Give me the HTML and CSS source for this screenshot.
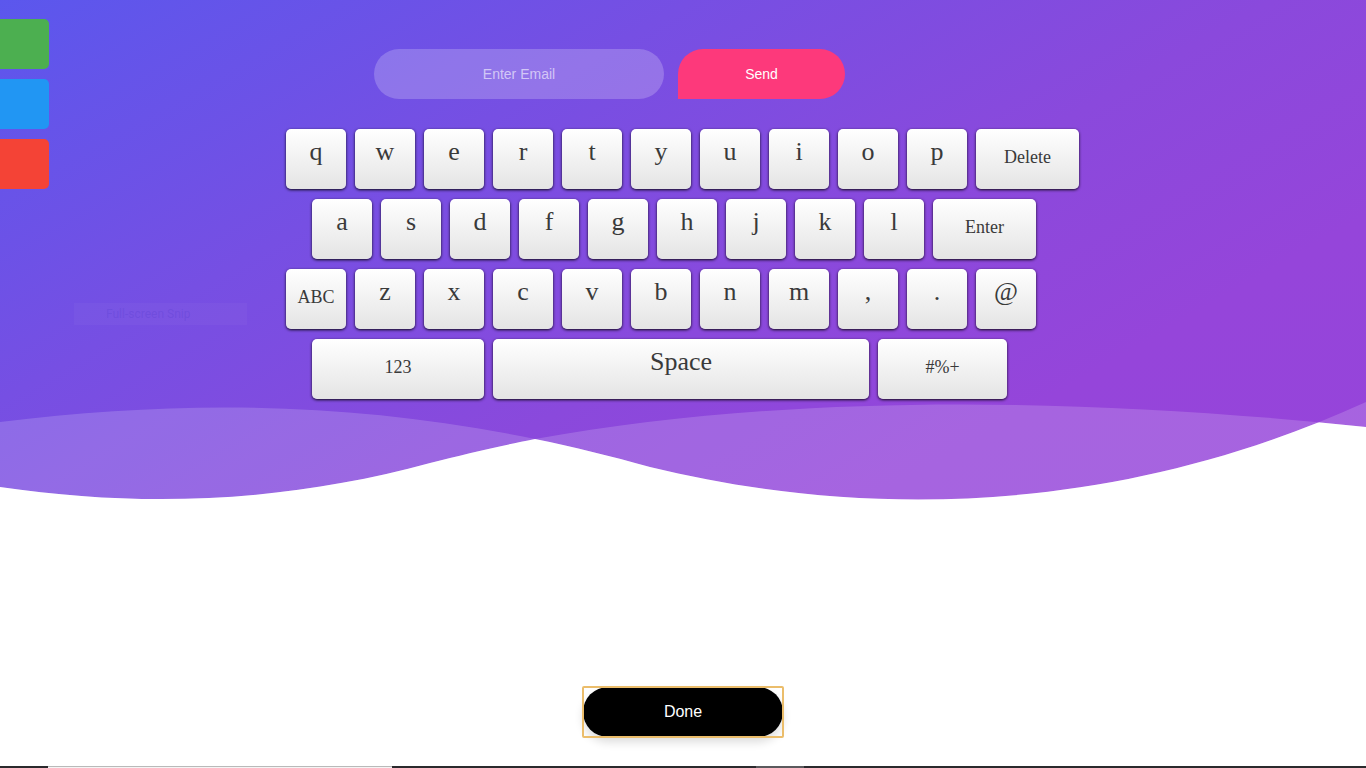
FILE: index.html
```html
<!DOCTYPE html>
<html lang="en">
<head>
<meta charset="utf-8">
<meta name="viewport" content="width=device-width, initial-scale=1">
<title>Enter Email</title>
<link rel="stylesheet" href="styles.css">
</head>
<body>
<nav class="side-tabs" aria-label="Shortcuts">
  <a class="side-tab side-tab--green" href="#" aria-label="Green"></a>
  <a class="side-tab side-tab--blue" href="#" aria-label="Blue"></a>
  <a class="side-tab side-tab--red" href="#" aria-label="Red"></a>
</nav>
<div class="hint">Full-screen Snip</div>
<main class="page">
  <section class="hero">
    <div class="panel">
      <form class="email-form">
        <input class="email-input" type="email" placeholder="Enter Email" aria-label="Enter Email">
        <button class="send" type="button">Send</button>
      </form>
      <div class="keyboard">
        <div class="row">
          <button class="key">q</button><button class="key">w</button><button class="key">e</button><button class="key">r</button><button class="key">t</button><button class="key">y</button><button class="key">u</button><button class="key">i</button><button class="key">o</button><button class="key">p</button><button class="key key--small key--action">Delete</button>
        </div>
        <div class="row row--indent">
          <button class="key">a</button><button class="key">s</button><button class="key">d</button><button class="key">f</button><button class="key">g</button><button class="key">h</button><button class="key">j</button><button class="key">k</button><button class="key">l</button><button class="key key--small key--action">Enter</button>
        </div>
        <div class="row">
          <button class="key key--small">ABC</button><button class="key">z</button><button class="key">x</button><button class="key">c</button><button class="key">v</button><button class="key">b</button><button class="key">n</button><button class="key">m</button><button class="key">,</button><button class="key">.</button><button class="key">@</button>
        </div>
        <div class="row row--indent">
          <button class="key key--small key--numbers">123</button><button class="key key--space">Space</button><button class="key key--small key--symbols">#%+</button>
        </div>
      </div>
    </div>
    <svg class="waves" viewBox="0 0 1366 100" preserveAspectRatio="none" aria-hidden="true">
      <defs>
        <clipPath id="below-first"><path d="M0 22C180 0 350 1 535 39C575 47 610 56 650 67C880 123 1130 110 1366 2V101H0Z"/></clipPath>
      </defs>
      <path class="wave" d="M0 22C180 0 350 1 535 39C575 47 610 56 650 67C880 123 1130 110 1366 2V101H0Z"/>
      <path class="wave" d="M0 87C150 109 290 101 430 63C465 54 495 47 535 39C790 -7 1080 -3 1366 27V101H0Z"/>
      <path class="ground" clip-path="url(#below-first)" d="M0 87C150 109 290 101 430 63C465 54 495 47 535 39C790 -7 1080 -3 1366 27V101H0Z"/>
    </svg>
  </section>
  <div class="actions">
    <div class="focus-frame"><button class="done" type="button">Done</button></div>
  </div>
  <footer class="strip">
    <span class="strip-start"></span><span class="strip-search"></span><span class="strip-gap"></span><span class="strip-active"></span>
  </footer>
</main>
</body>
</html>
```
FILE: styles.css
```css
* {
  box-sizing: border-box;
}

body {
  margin: 0;
  background: #fff;
  font-family: "Liberation Sans", Arial, sans-serif;
}

button,
input {
  border: 0;
  margin: 0;
  padding: 0;
  font: inherit;
}

button {
  cursor: pointer;
}

.page {
  display: flex;
  flex-direction: column;
  min-height: 100vh;
}

.side-tabs {
  position: absolute;
  top: 19px;
  left: 0;
  display: grid;
  gap: 10px;
}

.side-tab {
  width: 49px;
  height: 50px;
  border-radius: 0 5px 5px 0;
}

.side-tab--green { background: #4caf50; }
.side-tab--blue { background: #2196f3; }
.side-tab--red { background: #f44336; }

.hint {
  position: absolute;
  top: 303px;
  left: 74px;
  width: 173px;
  padding-left: 32px;
  background: rgba(255, 255, 255, 0.03);
  color: rgba(70, 50, 200, 0.2);
  font: 12px/22px Roboto, sans-serif;
}

.hero {
  padding-top: 49px;
  background: linear-gradient(150deg, #5b57ed 0%, #764fe3 31%, #8a49dc 57%, #9545da 78%, #9644da 100%);
}

.panel {
  width: 794px;
  max-width: 100%;
  margin: 0 auto;
}

.email-form {
  display: flex;
  gap: 14px;
  height: 50px;
  margin-bottom: 30px;
  padding-left: 88px;
  font-size: 14px;
}

.email-input {
  width: 290px;
  border-radius: 25px;
  background: rgba(255, 255, 255, 0.21);
  color: #fff;
  text-align: center;
}

.email-input::placeholder {
  color: rgba(255, 255, 255, 0.6);
}

.send {
  width: 167px;
  border-radius: 25px 25px 25px 0;
  background: #fd397b;
  color: #fff;
}

.keyboard {
  display: grid;
  gap: 10px;
}

.row {
  display: flex;
  gap: 9px;
}

.row--indent {
  padding-left: 26px;
}

.key {
  width: 60px;
  height: 60px;
  padding-bottom: 14px;
  border-radius: 5px;
  background: linear-gradient(#fff, #e4e4e4);
  box-shadow: 0 1px 3px rgba(0, 0, 0, 0.9);
  color: #3a3a3a;
  font: 26px/44px "Liberation Serif", "Times New Roman", serif;
}

.key--small {
  padding-bottom: 4px;
  font-size: 18px;
}

.key--action { width: 103px; }
.key--numbers { width: 172px; }
.key--space { width: 376px; }
.key--symbols { width: 129px; }

.waves {
  display: block;
  width: 100%;
  height: 100px;
  margin-top: 1px;
}

.wave {
  fill: #fff;
  fill-opacity: 0.17;
}

.ground {
  fill: #fff;
}

.actions {
  display: flex;
  flex: 1;
  align-items: flex-end;
  justify-content: center;
  padding: 30px 0 29px;
}

.focus-frame {
  display: flex;
  border-radius: 1px;
  outline: 2px solid #ebbd6b;
  outline-offset: -1px;
}

.done {
  width: 200px;
  height: 50px;
  border-radius: 25px;
  background: #000;
  box-shadow: 0 5px 10px rgba(0, 0, 0, 0.14);
  color: #fff;
  font-size: 16px;
}

.strip {
  display: flex;
  height: 2px;
  background: #2b2a2d;
}

.strip-start { width: 48px; }

.strip-search {
  width: 344px;
  border-top: 1px solid #b9b9b9;
  background: #f4f4f4;
}

.strip-gap { width: 364px; }

.strip-active {
  width: 48px;
  background: #5b5a5d;
}
```
